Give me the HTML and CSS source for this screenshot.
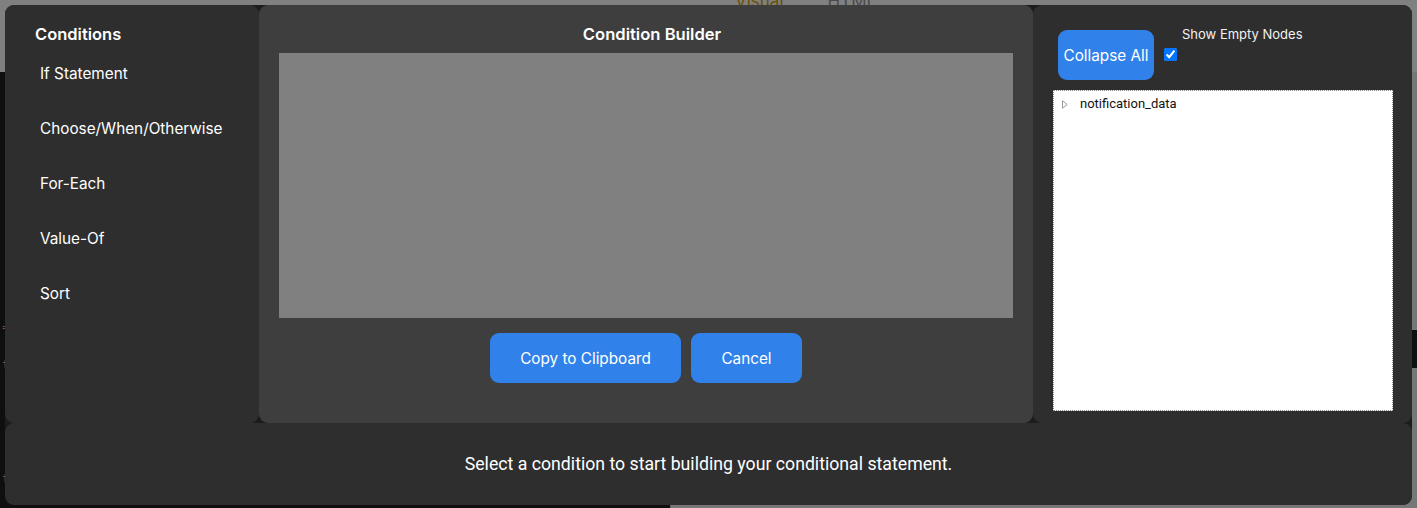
FILE: index.html
```html
<!DOCTYPE html>
<html>
<head>
<meta charset="utf-8">
<link rel="stylesheet" href="styles.css">
</head>
<body>
<div class="app">
  <div class="app-top">
    <span class="tab tab-active">Visual</span>
    <span class="tab">HTML</span>
  </div>
  <div class="app-main">
    <div class="editor">
      <span class="code c1">=</span>
      <span class="code c2">t</span>
      <span class="code c3">t</span>
    </div>
    <div class="preview">
      <div class="preview-block"></div>
    </div>
  </div>
</div>

<div class="modal">
  <aside class="panel conditions">
    <h2 class="conditions-title">Conditions</h2>
    <ul class="condition-list">
      <li class="condition-item">If Statement</li>
      <li class="condition-item">Choose/When/Otherwise</li>
      <li class="condition-item">For-Each</li>
      <li class="condition-item">Value-Of</li>
      <li class="condition-item">Sort</li>
    </ul>
  </aside>

  <section class="panel builder">
    <h2 class="builder-title">Condition Builder</h2>
    <div class="builder-canvas"></div>
    <div class="builder-actions">
      <button class="btn btn-copy">Copy to Clipboard</button>
      <button class="btn btn-cancel">Cancel</button>
    </div>
  </section>

  <aside class="panel data">
    <div class="data-toolbar">
      <button class="btn btn-collapse">Collapse All</button>
      <label class="empty-toggle">
        <span class="empty-label">Show Empty Nodes</span>
        <input type="checkbox" class="empty-check" checked>
      </label>
    </div>
    <div class="tree">
      <div class="tree-node">
        <svg class="tree-caret" width="6" height="9" viewBox="0 0 6 9"><path d="M0.5 0.8 L5.2 4.5 L0.5 8.2 Z" fill="none" stroke="#9a9a9a" stroke-width="1"/></svg>
        <span class="tree-label">notification_data</span>
      </div>
    </div>
  </aside>

  <footer class="panel status">
    <p class="status-text">Select a condition to start building your conditional statement.</p>
  </footer>
</div>
</body>
</html>
```

FILE: styles.css
```css
* { box-sizing: border-box; }

html, body {
  margin: 0;
  padding: 0;
  width: 1417px;
  height: 508px;
  overflow: hidden;
}

body {
  background: #7b7b7b;
  font-family: Inter, "Liberation Sans", sans-serif;
  position: relative;
}

/* background application */
.app {
  width: 100%;
  height: 100%;
  display: flex;
  flex-direction: column;
}

.app-top {
  height: 72px;
  background: #808080;
  display: flex;
  gap: 44px;
  padding-left: 735px;
}

.tab {
  font-size: 17px;
  line-height: 14px;
  color: #4a4a4a;
  margin-top: -6px;
}

.tab-active { color: #6a5000; }

.app-main {
  flex: 1;
  display: flex;
}

.editor {
  width: 670px;
  background: #0f0f0f;
  position: relative;
}

.code {
  position: absolute;
  left: 2px;
  font-family: "DejaVu Sans Mono", monospace;
  font-size: 12px;
  color: #8a4a30;
}
.c1 { top: 248px; }
.c2 { top: 286px; }
.c3 { top: 400px; }

.preview {
  flex: 1;
  background: #777777;
  position: relative;
  border-left: 1px solid #666;
}

.preview-block {
  position: absolute;
  right: 0;
  top: 258px;
  width: 10px;
  height: 38px;
  background: #101010;
}

/* modal */
.modal {
  position: absolute;
  left: 5px;
  top: 5px;
  width: 1407px;
  height: 500px;
  display: grid;
  grid-template-columns: 254px 774px 1fr;
  grid-template-rows: 418px 1fr;
  background: #1c1c1c;
  border-radius: 9px;
  color: #ffffff;
}

.panel {
  background: #2e2e2e;
  border-radius: 9px;
}

.conditions {
  padding: 19px 0 0 30px;
}

.conditions-title {
  margin: 0;
  font-size: 16.5px;
  font-weight: 600;
  line-height: 20px;
  height: 20px;
}

.condition-list {
  list-style: none;
  margin: 0;
  padding: 0 0 0 5px;
}

.condition-item {
  font-size: 15.3px;
  line-height: 18px;
  height: 55px;
  padding-top: 21px;
}

.builder {
  background: #3e3e3e;
  padding: 20px 20px 0 20px;
  display: flex;
  flex-direction: column;
}

.builder-title {
  margin: 0;
  text-align: center;
  font-size: 16.6px;
  font-weight: 600;
  line-height: 19px;
  height: 28px;
  padding-left: 12px;
}

.builder-canvas {
  height: 265px;
  background: #808080;
}

.builder-actions {
  display: flex;
  justify-content: center;
  gap: 10px;
  margin-top: 15px;
}

.btn {
  border: none;
  background: #3181ea;
  color: #ffffff;
  font-family: Inter, "Liberation Sans", sans-serif;
  font-size: 15.3px;
  height: 50px;
  border-radius: 9px;
  padding: 0;
}

.btn-copy { width: 191px; }
.btn-cancel { width: 111px; }

.data {
  padding: 25px 19px 0 20px;
}

.data-toolbar {
  display: flex;
  align-items: flex-start;
  height: 60px;
  padding-left: 5px;
}

.btn-collapse {
  width: 96px;
}

.empty-toggle {
  display: flex;
  flex-direction: column;
  align-items: flex-start;
  margin-left: 6px;
}

.empty-label {
  font-size: 13px;
  line-height: 15px;
  margin-left: 22px;
  margin-top: -3px;
  color: #f2f2f2;
}

.empty-check {
  margin: 6px 0 0 4px;
  width: 13px;
  height: 13px;
}

.tree {
  height: 321px;
  background: #ffffff;
  border: 1px dotted #8a8a8a;
  padding: 5px 8px;
}

.tree-node {
  display: flex;
  align-items: center;
  gap: 12px;
  color: #111;
  font-family: Roboto, "Liberation Sans", sans-serif;
  font-size: 13px;
  line-height: 16px;
}

.tree-caret { flex: none; }

.status {
  grid-column: 1 / -1;
  display: flex;
  align-items: center;
  justify-content: center;
}

.status-text {
  margin: 0;
  font-family: Roboto, "Liberation Sans", sans-serif;
  font-size: 17.7px;
  line-height: 20px;
}
```
